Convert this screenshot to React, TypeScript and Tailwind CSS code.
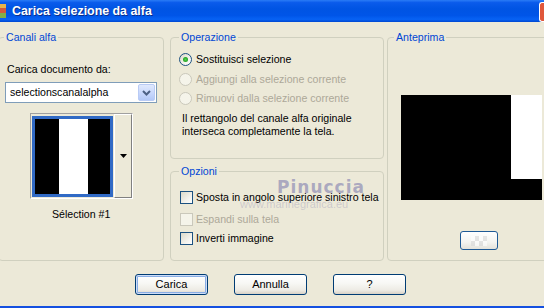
import React from "react";

function Radio({ checked, disabled }: { checked?: boolean; disabled?: boolean }) {
  return (
    <div
      className={`w-[13px] h-[13px] rounded-full border flex items-center justify-center shrink-0 ${
        disabled
          ? "border-[#CAC8BB] bg-[#F5F4EA]"
          : "border-[#1C5180] bg-[linear-gradient(135deg,#DCD9C8_0%,#F4F3EE_60%,#FFFFFF_100%)]"
      }`}
    >
      {checked && (
        <div className="w-[5px] h-[5px] rounded-full bg-[radial-gradient(circle,#55D350_0%,#21A121_70%,#1A8A1A_100%)]" />
      )}
    </div>
  );
}

function Check({ disabled }: { disabled?: boolean }) {
  return (
    <div
      className={`w-[13px] h-[13px] border shrink-0 ${
        disabled
          ? "border-[#CAC8BB] bg-[#F5F4EA]"
          : "border-[#1C5180] bg-[linear-gradient(135deg,#DCD9C8_0%,#F4F3EE_65%,#FFFFFF_100%)]"
      }`}
    />
  );
}

function XPButton({ children, isDefault }: { children: React.ReactNode; isDefault?: boolean }) {
  return (
    <div
      className={`w-[73px] h-[21px] shrink-0 rounded-[3px] border border-[#003C74] flex items-center justify-center text-[11px] bg-[linear-gradient(to_bottom,#FFFFFF_0%,#F7F7F4_45%,#EDEBE4_80%,#D8D2C6_100%)] ${
        isDefault ? "shadow-[inset_0_0_0_1px_#CEDDF7,inset_0_0_0_2px_#89ADE4]" : ""
      }`}
    >
      {children}
    </div>
  );
}

export default function App() {
  return (
    <div className="w-[544px] h-[308px] overflow-hidden bg-[#ECE9D8] flex flex-col text-[10.6px] leading-[13px] text-black font-['Liberation_Sans',Arial,sans-serif]">
      {/* Title bar */}
      <div className="h-[22px] shrink-0 flex items-center bg-[linear-gradient(to_bottom,#2A7CF6_0%,#0A5BEB_12%,#0054E3_40%,#0055E8_70%,#0762F4_88%,#0047D0_100%)]">
        <div className="w-[6px] h-[14px] flex flex-col shrink-0">
          <div className="h-[4px] bg-[#E8B44A]" />
          <div className="h-[5px] bg-[#D25A3C]" />
          <div className="h-[5px] bg-[#7FAF4A]" />
        </div>
        <div className="ml-[6px] text-white font-bold text-[12.4px] leading-[16px] [text-shadow:1px_1px_0_#0A2E8C] whitespace-nowrap">
          Carica selezione da alfa
        </div>
        <div className="flex-1" />
        <div className="w-[5px] h-[20px] mt-[1px] shrink-0 rounded-l-[3px] border border-r-0 border-white bg-[#E0573B]" />
      </div>

      {/* Body */}
      <div className="relative flex-1 flex flex-col pt-[9px]">
        <div className="flex">
          {/* Left group */}
          <fieldset className="-ml-[2px] w-[166px] shrink-0 h-[230px] border border-[#D0D0BF] rounded-[4px] p-0 flex flex-col">
            <legend className="ml-[5px] px-[2px] text-[#0046D5]">Canali alfa</legend>
            <div className="ml-[8px] mt-[19px] whitespace-nowrap">Carica documento da:</div>
            <div className="ml-[6px] mt-[6px] w-[152px] h-[21px] border border-[#7F9DB9] bg-white flex items-center">
              <span className="ml-[4px] flex-1">selectionscanalalpha</span>
              <div className="w-[17px] h-[17px] mr-[1px] rounded-[2px] border border-[#B9CBF5] bg-[linear-gradient(to_bottom,#E0E9FD_0%,#C6D6FC_60%,#B3C8F7_100%)] flex items-center justify-center">
                <svg width="9" height="6" viewBox="0 0 9 6">
                  <path d="M1 1 L4.5 4.5 L8 1" stroke="#4D6185" strokeWidth="2" fill="none" />
                </svg>
              </div>
            </div>
            <div className="ml-[31px] mt-[10px] w-[103px] h-[86px] border border-t-[#A0A0A0] border-l-[#A0A0A0] border-r-white border-b-white flex">
              <div className="ml-[1px] mt-[2px] w-[82px] h-[81px] border-[3px] border-[#316AC5] flex">
                <div className="w-[24px] bg-black" />
                <div className="w-[29px] bg-white" />
                <div className="flex-1 bg-black" />
              </div>
              <div className="ml-[1px] w-[18px] h-[84px] border border-t-white border-l-white border-r-[#808080] border-b-[#808080] bg-[#ECE9D8] flex items-center justify-center">
                <svg width="7" height="4" viewBox="0 0 7 4">
                  <path d="M0 0 H7 L3.5 4 Z" fill="#000" />
                </svg>
              </div>
            </div>
            <div className="mt-[9px] ml-[53px] whitespace-nowrap">Sélection #1</div>
          </fieldset>

          {/* Middle column */}
          <div className="ml-[6px] w-[214px] shrink-0 flex flex-col">
            <fieldset className="h-[128px] border border-[#D0D0BF] rounded-[4px] p-0 flex flex-col">
              <legend className="ml-[8px] px-[2px] text-[#0046D5]">Operazione</legend>
              <div className="mt-[5px] flex flex-col">
                <div className="h-[20px] flex items-center pl-[8px] gap-[4px]">
                  <Radio checked />
                  <span>Sostituisci selezione</span>
                </div>
                <div className="h-[20px] flex items-center pl-[8px] gap-[4px] text-[#ACA899]">
                  <Radio disabled />
                  <span>Aggiungi alla selezione corrente</span>
                </div>
                <div className="h-[19px] flex items-center pl-[8px] gap-[4px] text-[#ACA899]">
                  <Radio disabled />
                  <span>Rimuovi dalla selezione corrente</span>
                </div>
              </div>
              <div className="mt-[4px] pl-[11px] leading-[12.5px]">
                Il rettangolo del canale alfa originale
                <br />
                interseca completamente la tela.
              </div>
            </fieldset>
            <fieldset className="mt-[6px] h-[96px] border border-[#D0D0BF] rounded-[4px] p-0 flex flex-col">
              <legend className="ml-[8px] px-[2px] text-[#0046D5]">Opzioni</legend>
              <div className="mt-[13px] h-[13px] flex items-center pl-[9px] gap-[3px] whitespace-nowrap">
                <Check />
                <span>Sposta in angolo superiore sinistro tela</span>
              </div>
              <div className="mt-[9px] h-[13px] flex items-center pl-[9px] gap-[3px] text-[#ACA899]">
                <Check disabled />
                <span>Espandi sulla tela</span>
              </div>
              <div className="mt-[6px] h-[13px] flex items-center pl-[9px] gap-[3px]">
                <Check />
                <span>Inverti immagine</span>
              </div>
            </fieldset>
          </div>

          {/* Right group */}
          <fieldset className="ml-[3px] w-[162px] shrink-0 h-[230px] border border-[#D0D0BF] rounded-[4px] p-0 flex flex-col">
            <legend className="ml-[6px] px-[2px] text-[#0046D5]">Anteprima</legend>
            <div className="ml-[13px] mt-[51px] w-[141px] h-[105px] bg-black flex justify-end">
              <div className="w-[31px] h-[84px] bg-white" />
            </div>
            <div className="ml-[72px] mt-[31px] w-[38px] h-[19px] rounded-[3px] border border-[#1F5A96] bg-[linear-gradient(to_bottom,#FFFFFF_0%,#F4F4F0_60%,#E4E2DA_100%)] flex items-center justify-center">
              <div className="w-[16px] h-[10px] grid grid-cols-4 grid-rows-2 opacity-60">
                <div className="bg-white" />
                <div className="bg-[#D8D8D8]" />
                <div className="bg-white" />
                <div className="bg-[#D8D8D8]" />
                <div className="bg-[#D8D8D8]" />
                <div className="bg-white" />
                <div className="bg-[#D8D8D8]" />
                <div className="bg-white" />
              </div>
            </div>
          </fieldset>
        </div>

        {/* Buttons */}
        <div className="mt-[13px] pl-[135px] flex gap-[26px]">
          <XPButton isDefault>Carica</XPButton>
          <XPButton>Annulla</XPButton>
          <XPButton>?</XPButton>
        </div>

        {/* Watermark */}
        <div className="absolute left-[277px] top-[156px] text-[17px] leading-[18px] font-bold tracking-[1px] text-[#8E8CB4]/70 font-['DejaVu_Sans',sans-serif] pointer-events-none">
          Pinuccia
        </div>
        <div className="absolute left-[240px] top-[176px] text-[11px] leading-[12px] text-[#8E8CB4]/35 pointer-events-none whitespace-nowrap">
          www.marinegrafica.eu
        </div>
      </div>
      <div className="h-[2px] shrink-0 bg-[#1450E0]" />
    </div>
  );
}
